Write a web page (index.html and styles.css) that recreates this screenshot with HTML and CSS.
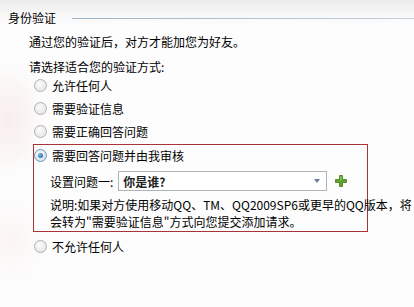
FILE: index.html
```html
<!DOCTYPE html>
<html lang="zh-CN">

<head>
  <meta charset="utf8">
  <title>身份验证</title>
  <link rel="stylesheet" href="styles.css">
</head>

<body>
  <div class="verify-panel">
    <div class="panel-head">
      <span class="panel-title">身份验证</span>
      <div class="head-line"></div>
    </div>

    <div class="panel-body">
      <p class="intro">通过您的验证后，对方才能加您为好友。</p>
      <p class="prompt">请选择适合您的验证方式:</p>

      <label class="option">
        <span class="radio"></span>
        <span>允许任何人</span>
      </label>
      <label class="option">
        <span class="radio"></span>
        <span>需要验证信息</span>
      </label>
      <label class="option">
        <span class="radio"></span>
        <span>需要正确回答问题</span>
      </label>

      <div class="selected-box">
        <label class="option first">
          <span class="radio checked"></span>
          <span>需要回答问题并由我审核</span>
        </label>

        <div class="question-row">
          <span>设置问题一:</span>
          <div class="combo">
            <span class="combo-text">你是谁?</span>
            <span class="combo-arrow"></span>
          </div>
          <svg class="add-btn" width="12" height="12" viewBox="0 0 12 12">
            <path d="M4.5 0.5h3v4h4v3h-4v4h-3v-4h-4v-3h4z" fill="#63a32c" stroke="#3f7d1a" stroke-width="0.8"/>
            <path d="M5.2 1.2h1.4v4h-1.4z" fill="#8cc85a"/>
          </svg>
        </div>

        <p class="note">说明:如果对方使用移动QQ、TM、QQ2009SP6或更早的QQ版本，将<br>会转为&quot;需要验证信息&quot;方式向您提交添加请求。</p>
      </div>

      <label class="option last">
        <span class="radio"></span>
        <span>不允许任何人</span>
      </label>
    </div>
  </div>
</body>

</html>
```

FILE: styles.css
```css
* {
  box-sizing: border-box;
}

body {
  margin: 0;
  font-family: "Noto Sans CJK SC", "Liberation Sans", sans-serif;
  font-size: 12px;
  color: #000;
  background-color: #fdfdfd;
}

div.verify-panel {
  width: 414px;
  height: 307px;
  overflow: hidden;
  background:
    radial-gradient(ellipse 40px 60px at 8px 120px, rgba(240, 205, 205, .35), transparent),
    radial-gradient(ellipse 40px 50px at 10px 240px, rgba(245, 220, 220, .25), transparent),
    linear-gradient(#ebebeb, #f8f8f8 15px, #fdfdfd 26px);
}

div.panel-head {
  display: flex;
  align-items: center;
  padding-top: 11px;
  padding-left: 8px;
  line-height: 14px;
}

div.panel-head div.head-line {
  flex-grow: 1;
  height: 1px;
  margin-left: 16px;
  background: linear-gradient(to right, #9db4c6, #c3d0da);
}

div.panel-body {
  padding-left: 29px;
}

div.panel-body p {
  margin: 0;
  line-height: 14px;
}

div.panel-body p.intro {
  margin-top: 10px;
}

div.panel-body p.prompt {
  margin-top: 11px;
}

label.option {
  display: flex;
  align-items: center;
  height: 23px;
  padding-left: 5px;
  column-gap: 5px;
}

label.option.first {
  height: 21px;
  padding-left: 0;
}

label.option.last {
  margin-top: 3px;
}

span.radio {
  width: 13px;
  height: 13px;
  border-radius: 50%;
  border: 1px solid #b0b0b0;
  background: radial-gradient(circle at 40% 35%, #fbfbfb, #e0e0e0);
  position: relative;
}

span.radio.checked {
  border-color: #6d97b9;
  background: radial-gradient(circle at 40% 35%, #f4f8fb, #c9dbe8);
}

span.radio.checked:before {
  content: " ";
  position: absolute;
  top: 3px;
  left: 3px;
  width: 5px;
  height: 5px;
  border-radius: 50%;
  background: radial-gradient(circle at 35% 35%, #7fb2dc, #1f5d96);
}

div.selected-box {
  width: 335px;
  height: 88px;
  margin-left: 4px;
  margin-top: 1px;
  border: 1px solid #a8343a;
  white-space: nowrap;
}

div.question-row {
  display: flex;
  align-items: center;
  margin-top: 5px;
  padding-left: 16px;
  height: 20px;
}

div.combo {
  display: flex;
  align-items: center;
  width: 209px;
  height: 20px;
  margin-left: 5px;
  border: 1px solid #abb3bb;
  background-color: #fff;
  padding-left: 4px;
  padding-right: 6px;
}

div.combo span.combo-text {
  flex-grow: 1;
  font-weight: bold;
  color: #222;
}

div.combo span.combo-arrow {
  width: 0;
  height: 0;
  border-left: 3px solid transparent;
  border-right: 3px solid transparent;
  border-top: 4px solid #6b7c8c;
}

svg.add-btn {
  margin-left: 8px;
}

div.selected-box p.note {
  margin-top: 5px;
  padding-left: 16px;
  line-height: 17px;
}
```
